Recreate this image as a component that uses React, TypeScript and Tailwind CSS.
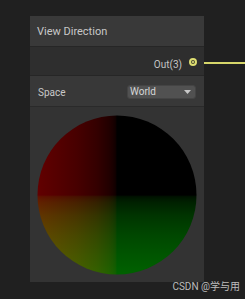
import React from 'react';

const ramp = [
  [0, '#000000'],
  [0.02, '#110000'],
  [0.05, '#190000'],
  [0.1, '#220000'],
  [0.25, '#340000'],
  [0.5, '#470000'],
  [0.75, '#550000'],
  [1, '#620000'],
];

const Preview: React.FC = () => (
  <svg width="160" height="160" viewBox="0 0 160 160">
    <defs>
      <linearGradient id="red" x1="80" y1="0" x2="0" y2="0" gradientUnits="userSpaceOnUse">
        {ramp.map(([o, c]) => (
          <stop key={o} offset={o as number} stopColor={c as string} />
        ))}
      </linearGradient>
      <linearGradient id="green" x1="0" y1="80" x2="0" y2="160" gradientUnits="userSpaceOnUse">
        {ramp.map(([o, c]) => (
          <stop key={o} offset={o as number} stopColor={(c as string).replace(/#(..)0000/, '#00$100')} />
        ))}
      </linearGradient>
      <clipPath id="disc">
        <circle cx="80" cy="80" r="79.5" />
      </clipPath>
    </defs>
    <g clipPath="url(#disc)">
      <rect width="160" height="160" fill="#000" />
      <rect x="0" y="0" width="80" height="160" fill="url(#red)" />
      <rect x="0" y="80" width="160" height="80" fill="url(#green)" style={{ mixBlendMode: 'screen' }} />
    </g>
  </svg>
);

const App: React.FC = () => {
  return (
    <div className="relative w-[245px] h-[299px] bg-[#202020] pt-[16px] pl-[30px] overflow-hidden" style={{ fontFamily: 'Roboto, "Noto Sans CJK SC", sans-serif' }}>
      <div className="w-[174px] flex flex-col bg-[#333333]">
        <div className="h-[31px] bg-[#393939] border-b border-[#262626] flex items-center pl-[7px] text-[11px] text-[#c8c8c8]">
          <span className="mt-[2px]">View Direction</span>
        </div>
        <div className="h-[29px] bg-[#2e2e2e] border-b border-[#262626] flex items-center justify-end pr-[7px] gap-[7px] text-[10px] text-[#c4c4c4]">
          <span className="mt-[6px]">Out(3)</span>
          <span className="mt-[2px] w-[8px] h-[8px] rounded-full border-2 border-[#dede72] bg-[#4a4a30] flex items-center justify-center">
            <span className="w-[2px] h-[2px] rounded-full bg-[#e8e880]" />
          </span>
        </div>
        <div className="h-[31px] bg-[#383838] border-b border-[#2a2a2a] flex items-center justify-between pl-[8px] pr-[8px] text-[10px] text-[#c8c8c8]">
          <span className="mt-[3px]">Space</span>
          <div className="w-[69px] h-[14px] mt-[1px] rounded-[3px] bg-[#515151] border border-[#444] flex items-center justify-between pl-[2px] pr-[4px] text-[#d6d6d6]">
            <span>World</span>
            <svg width="7" height="4" viewBox="0 0 7 4"><path d="M0 0h7L3.5 4z" fill="#c8c8c8" /></svg>
          </div>
        </div>
        <div className="h-[175px] flex justify-center pt-[8px]">
          <Preview />
        </div>
      </div>
      <div className="absolute left-[204px] top-[62px] w-[41px] h-[1.5px] bg-[#d6d66a]" />
      <div className="absolute right-[5px] top-[279px] text-[10px] text-[#bdbdbd]">CSDN @学与用</div>
    </div>
  );
};

export default App;
